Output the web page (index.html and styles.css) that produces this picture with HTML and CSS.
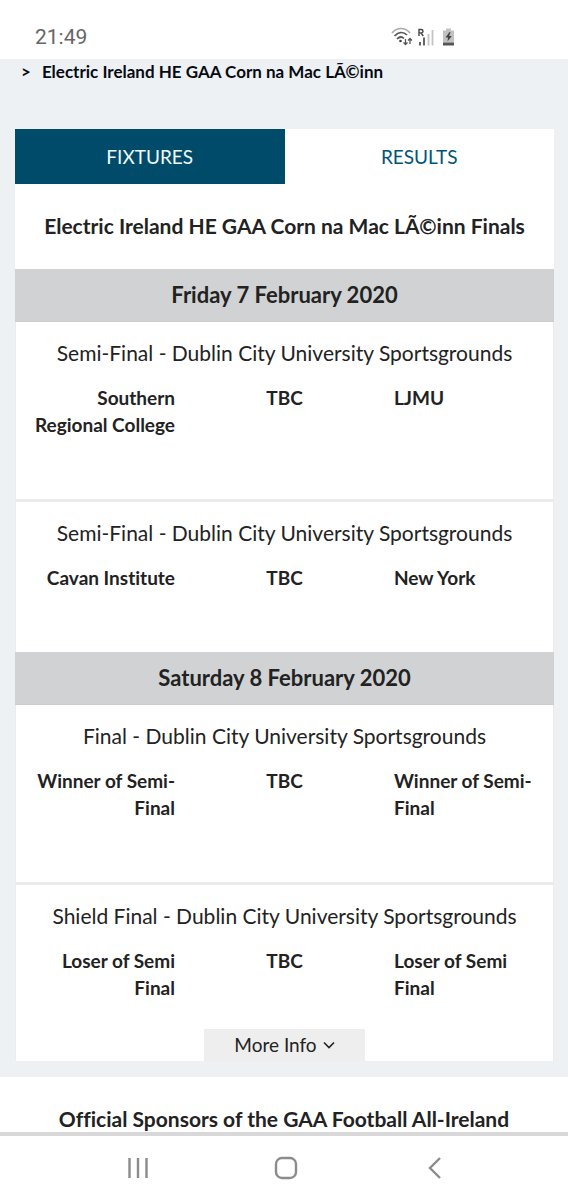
FILE: index.html
```html
<!DOCTYPE html>
<html lang="en">
<head>
<meta charset="utf-8">
<meta name="viewport" content="width=device-width, initial-scale=1">
<title>Fixtures</title>
<link rel="stylesheet" href="styles.css">
</head>
<body>
<header class="status">
  <time class="clock">21:49</time>
  <svg class="status-icons" width="66" height="20" viewBox="0 0 66 20" fill="none" aria-hidden="true">
    <path d="M2 6C7 0 15 0 20 6" stroke="#aaa" stroke-width="1.7"/>
    <path d="M4.500 9C8.500 4.500 13.500 4.500 17 8M7 12C9.500 9.500 12 9.500 14 11.500" stroke="#555" stroke-width="1.7"/>
    <circle cx="10.500" cy="14" r="1.300" fill="#444"/>
    <path d="M15.500 12v5.500M13.500 15.500l2 2 2-2M20 17v-5.500M18 13.500l2-2 2 2" stroke="#555" stroke-width="1.300"/>
    <path d="M29 9V2.500h2.200q1.800 0 1.800 1.700t-1.800 1.700H29M31 6l2.300 3" stroke="#444" stroke-width="1.400"/>
    <path d="M30 15v3.500M34 10.500v8" stroke="#555" stroke-width="1.800"/>
    <path d="M38.500 7v11.500M42.500 3v15.500" stroke="#c4c4c4" stroke-width="1.800"/>
    <path d="M53 3.500h3V1.500h5v2h3v12H53z" fill="#c2c2c2"/>
    <path d="M53 15.500h11v3H53z" fill="#555"/>
    <path d="M59.500 5l-4 5.500h2.500l-.500 4 4.300-5.500h-2.600l1.300-4z" fill="#444"/>
  </svg>
</header>
<main class="page">
  <nav class="crumbs" aria-label="Breadcrumb">
    <span class="crumb-mark">&gt;</span>
    <span>Electric Ireland HE GAA Corn na Mac LÃ©inn</span>
  </nav>
  <div class="panel">
    <div class="tabs" role="tablist">
      <button class="tab tab-active" role="tab" aria-selected="true">FIXTURES</button>
      <button class="tab" role="tab" aria-selected="false">RESULTS</button>
    </div>
    <h1 class="title">Electric Ireland HE GAA Corn na Mac LÃ©inn Finals</h1>

    <h2 class="date">Friday 7 February 2020</h2>
    <article class="fixture">
      <h3 class="venue">Semi-Final - Dublin City University Sportsgrounds</h3>
      <div class="teams">
        <span class="home">Southern Regional College</span>
        <span class="time">TBC</span>
        <span class="away">LJMU</span>
      </div>
    </article>
    <article class="fixture">
      <h3 class="venue">Semi-Final - Dublin City University Sportsgrounds</h3>
      <div class="teams">
        <span class="home">Cavan Institute</span>
        <span class="time">TBC</span>
        <span class="away">New York</span>
      </div>
    </article>

    <h2 class="date">Saturday 8 February 2020</h2>
    <article class="fixture">
      <h3 class="venue">Final - Dublin City University Sportsgrounds</h3>
      <div class="teams">
        <span class="home">Winner of Semi-Final</span>
        <span class="time">TBC</span>
        <span class="away">Winner of Semi-Final</span>
      </div>
    </article>
    <article class="fixture fixture-more">
      <h3 class="venue">Shield Final - Dublin City University Sportsgrounds</h3>
      <div class="teams">
        <span class="home">Loser of Semi Final</span>
        <span class="time">TBC</span>
        <span class="away">Loser of Semi Final</span>
      </div>
      <button class="more">More Info
        <svg width="12" height="8" viewBox="0 0 12 8" fill="none" aria-hidden="true"><path d="M1 1.500l5 5 5-5" stroke="#222" stroke-width="1.600"/></svg>
      </button>
    </article>
  </div>
</main>
<section class="sponsors">
  <h2 class="sponsors-title">Official Sponsors of the GAA Football All-Ireland</h2>
</section>
<nav class="system" aria-label="System">
  <button class="key" aria-label="Recent apps"><svg width="24" height="24" viewBox="0 0 24 24" fill="none"><path d="M3.500 2v20M12 2v20M20.500 2v20" stroke="#8c8c8c" stroke-width="2.400"/></svg></button>
  <button class="key" aria-label="Home"><svg width="24" height="24" viewBox="0 0 24 24" fill="none"><rect x="2" y="2" width="20" height="20" rx="6" stroke="#8c8c8c" stroke-width="2.400"/></svg></button>
  <button class="key" aria-label="Back"><svg width="24" height="24" viewBox="0 0 24 24" fill="none"><path d="M18 2L8 12l10 10" stroke="#8c8c8c" stroke-width="2.400"/></svg></button>
</nav>
</body>
</html>
```
FILE: styles.css
```css
* { box-sizing: border-box; }
body {
  margin: 0;
  background: #fff;
  color: #222;
  font-family: Lato, "Open Sans", sans-serif;
  font-size: 19px;
  font-variant-ligatures: no-common-ligatures;
  line-height: 28px;
}
h1, h2, h3 { margin: 0; font-size: 21px; }
button {
  border: 0;
  padding: 0;
  background: none;
  color: inherit;
  font: inherit;
}
.status {
  display: flex;
  align-items: center;
  justify-content: space-between;
  padding: 15px 112px 0 35px;
  height: 59px;
}
.clock {
  color: #666;
  font-family: Roboto, sans-serif;
  font-size: 21px;
}
.page {
  background: #edf1f4;
  padding: 0 14px 16px 15px;
}
.crumbs {
  display: flex;
  gap: 11px;
  padding: 0 6px;
  height: 70px;
  color: #080a12;
  font-size: 17px;
  font-weight: 700;
  line-height: 25px;
}
.panel { background: #fff; }
.tabs { display: grid; grid-template-columns: 1fr 1fr; }
.tab { height: 55px; color: #005577; }
.tab-active { background: #004b69; color: #f0fbff; }
.title { padding: 28px 0 29px; text-align: center; }
.date {
  padding: 12px 0;
  border-bottom: 1px solid #cbcdd0;
  background: #d1d2d4;
  font-size: 22px;
  text-align: center;
}
.fixture {
  padding: 17px 0 61px;
  border: 1px solid #ebebeb;
  border-width: 0 1px;
}
.fixture + .fixture { border-top-width: 3px; }
.venue { font-weight: 400; text-align: center; }
.teams {
  display: grid;
  grid-template-columns: repeat(3, 1fr);
  padding-top: 17px;
  font-weight: 700;
  line-height: 27px;
}
.home { padding: 0 20px 0 8px; text-align: right; }
.time { text-align: center; }
.away { padding: 0 8px 0 20px; }
.fixture + .fixture-more { padding-bottom: 0; }
.more {
  display: flex;
  align-items: center;
  justify-content: center;
  gap: 6px;
  width: 30%;
  height: 32px;
  margin: 28px auto 0;
  background: #eee;
}
.sponsors {
  padding-top: 29px;
  border-bottom: 4px solid #d8d8d8;
  line-height: 26px;
  text-align: center;
}
.system {
  display: grid;
  grid-template-columns: repeat(3, 148px);
  justify-content: center;
  padding: 20px 0 20px 4px;
}
.key { display: grid; place-items: center; height: 24px; }
```
